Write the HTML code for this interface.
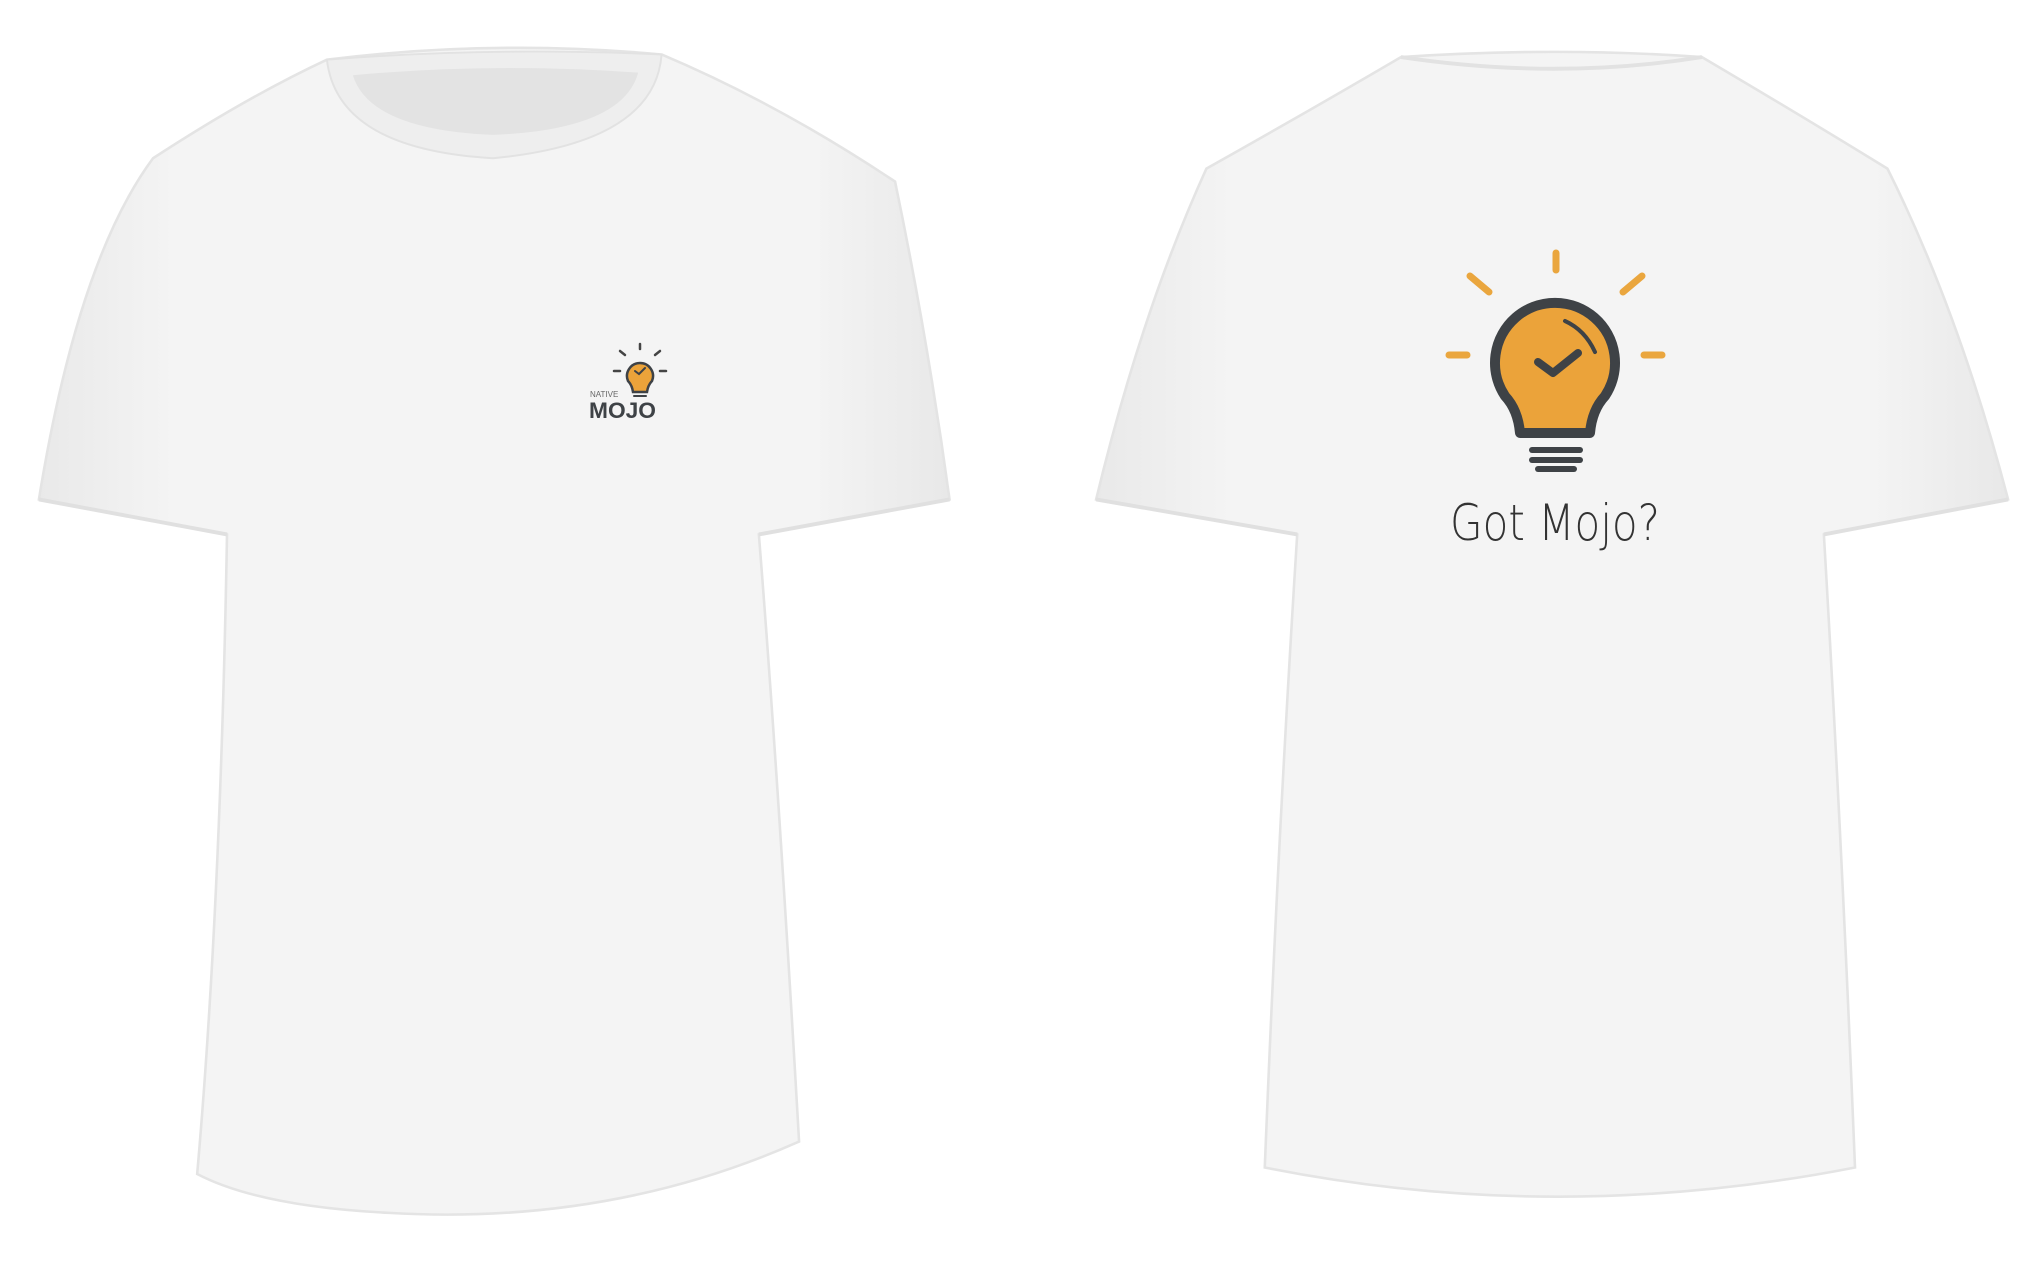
<!DOCTYPE html>
<html><head><meta charset="utf-8"><style>
html,body{margin:0;padding:0;background:#fff;width:2034px;height:1280px;overflow:hidden}
</style></head><body>
<svg width="2034" height="1280" viewBox="0 0 2034 1280" xmlns="http://www.w3.org/2000/svg">
<defs>
<linearGradient id="g" x1="0" x2="1" y1="0" y2="0">
<stop offset="0" stop-color="#e9e9e9"/><stop offset="0.15" stop-color="#f4f4f4"/><stop offset="0.85" stop-color="#f4f4f4"/><stop offset="1" stop-color="#e8e8e8"/>
</linearGradient>
</defs>
<rect width="2034" height="1280" fill="#fff"/>
<g transform="scale(1.2972)">
 <!-- left shirt (front) -->
 <path d="M252,46 Q380,30 510,42 Q600,80 690,140 Q715,260 732,385 L585,412 Q600,600 616,880 Q470,945 300,935 Q200,930 152,905 Q170,700 175,412 L30,385 Q60,200 118,122 Q190,75 252,46 Z" fill="url(#g)" stroke="#e4e4e4" stroke-width="2"/>
 <path d="M252,46 Q380,36 510,42 Q505,110 380,122 Q260,115 252,46 Z" fill="#eeeeee" stroke="#e2e2e2" stroke-width="1.5"/>
 <path d="M272,58 Q380,48 492,56 Q480,100 380,104 Q285,100 272,58 Z" fill="#e3e3e3"/>
 <path d="M30,385 L175,412 M585,412 L732,385" stroke="#e0e0e0" stroke-width="3"/>
 <!-- right shirt (back) -->
 <path d="M1080,44 Q1200,36 1312,44 Q1390,90 1455,130 Q1510,240 1548,385 L1406,412 Q1420,650 1430,900 Q1200,945 975,900 Q985,650 1000,412 L845,385 Q880,240 930,130 Q1010,85 1080,44 Z" fill="url(#g)" stroke="#e4e4e4" stroke-width="2"/>
 <path d="M1080,44 Q1200,62 1312,44" fill="none" stroke="#e2e2e2" stroke-width="3"/>
 <path d="M845,385 L1000,412 M1406,412 L1548,385" stroke="#e0e0e0" stroke-width="3"/>
</g>
<!-- big logo -->
<g stroke-linecap="round">
 <g stroke="#eaa63e" stroke-width="7">
  <line x1="1556" y1="253" x2="1556" y2="270"/>
  <line x1="1470" y1="276" x2="1489" y2="292"/>
  <line x1="1642" y1="276" x2="1623" y2="292"/>
  <line x1="1449" y1="355" x2="1467" y2="355"/>
  <line x1="1644" y1="355" x2="1662" y2="355"/>
 </g>
 <path d="M1520,433 Q1518,410 1505,396 A60,60 0 1 1 1605,396 Q1592,410 1590,433 Z" fill="#eba33a" stroke="#3e4246" stroke-width="10" stroke-linejoin="round"/>
 <path d="M1565,321 Q1585,330 1595,352" fill="none" stroke="#3e4246" stroke-width="4"/>
 <path d="M1538,362 L1553,373 L1578,353" fill="none" stroke="#3e4246" stroke-width="8" stroke-linejoin="round"/>
 <line x1="1532" y1="450" x2="1580" y2="450" stroke="#3e4246" stroke-width="6"/>
 <line x1="1532" y1="460" x2="1580" y2="460" stroke="#3e4246" stroke-width="6"/>
 <line x1="1538" y1="469" x2="1574" y2="469" stroke="#3e4246" stroke-width="6"/>
</g>
<text x="1555" y="540" text-anchor="middle" font-family="DejaVu Sans, sans-serif" font-size="50" font-weight="200" fill="#333" textLength="210" lengthAdjust="spacingAndGlyphs">Got Mojo?</text>
<!-- small logo -->
<g stroke-linecap="round">
 <g stroke="#444" stroke-width="2.5">
  <line x1="640" y1="344" x2="640" y2="349"/>
  <line x1="620" y1="351" x2="625" y2="355"/>
  <line x1="660" y1="351" x2="655" y2="355"/>
  <line x1="614" y1="371" x2="620" y2="371"/>
  <line x1="660" y1="371" x2="666" y2="371"/>
 </g>
 <path d="M633,392 Q632,385 628,381 A13,13 0 1 1 652,381 Q648,385 647,392 Z" fill="#eba33a" stroke="#3e4246" stroke-width="2.5"/>
 <path d="M635,371 L639,374 L645,368" fill="none" stroke="#3e4246" stroke-width="2"/>
 <line x1="634" y1="396" x2="646" y2="396" stroke="#3e4246" stroke-width="2"/>
</g>
<text x="590" y="397" font-family="Liberation Sans, sans-serif" font-size="8" fill="#666">NATIVE</text>
<text x="589" y="418" font-family="Liberation Sans, sans-serif" font-size="22" font-weight="bold" fill="#3e4246" textLength="67" lengthAdjust="spacingAndGlyphs">MOJO</text>
</svg>
</body></html>
